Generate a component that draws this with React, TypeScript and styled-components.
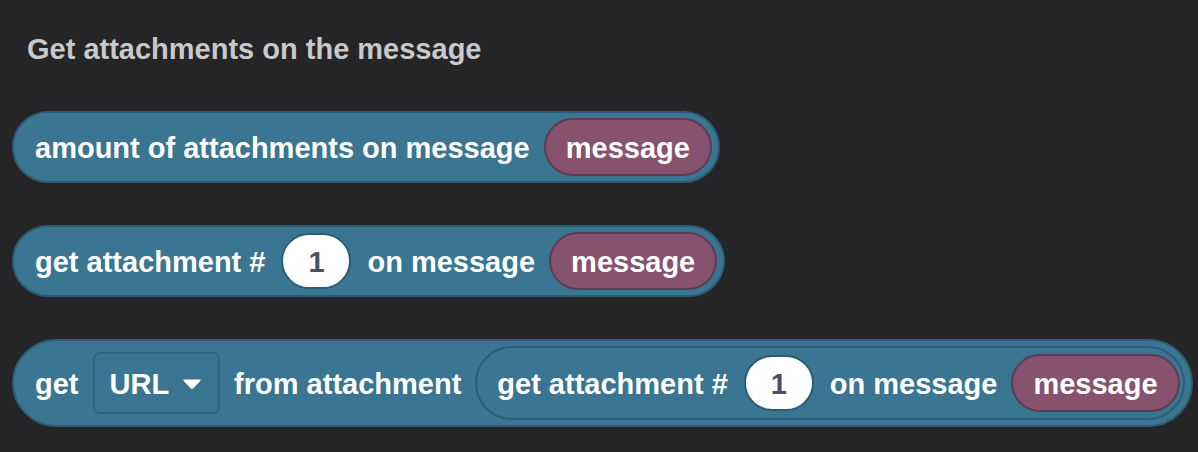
import React from 'react';
import styled, { createGlobalStyle } from 'styled-components';

const GlobalStyle = createGlobalStyle`
  html, body {
    margin: 0;
    background: #252527;
  }
  body {
    font-family: "Liberation Sans", Arial, sans-serif;
  }
`;

const Page = styled.div`
  display: flex;
  flex-direction: column;
  align-items: flex-start;
  gap: 42px;
  padding: 32px 12px 0;
`;

const Title = styled.h1`
  margin: 0 0 3px 15px;
  font-size: 29px;
  line-height: 34px;
  font-weight: 700;
  color: #c9c9c9;
`;

const Block = styled.div<{ $nested?: boolean }>`
  display: inline-flex;
  align-items: center;
  gap: 14px;
  box-sizing: border-box;
  padding: ${(p) => (p.$nested ? '6px 3px 6px 20px' : '5px 6px 5px 21px')};
  background: #3a7592;
  border: 2px solid #2d5d76;
  border-radius: 999px;
  color: #fff;
  font-size: 29px;
  font-weight: 700;
  white-space: nowrap;
`;

const Label = styled.span`
  line-height: 34px;
  padding-top: 2px;
`;

const VarPill = styled.span`
  display: inline-flex;
  align-items: center;
  box-sizing: border-box;
  height: 58px;
  padding: 2px 20px 0;
  background: #87526e;
  border: 2px solid #5f3c55;
  border-radius: 999px;
  color: #fff;
`;

const NumberField = styled.span`
  display: inline-flex;
  align-items: center;
  justify-content: center;
  box-sizing: border-box;
  width: 70px;
  height: 56px;
  padding-top: 2px;
  margin: 0 2px;
  background: #fff;
  border: 2px solid #2d5d76;
  border-radius: 999px;
  color: #4b4f68;
`;

const Dropdown = styled.span`
  display: inline-flex;
  align-items: center;
  gap: 13px;
  box-sizing: border-box;
  height: 62px;
  padding: 2px 16px 0 15px;
  border: 2px solid #2e6480;
  border-radius: 7px;
  color: #fff;
`;

const Caret = () => (
  <svg width="20" height="12" viewBox="0 0 20 12">
    <path d="M2.2 1.5 H17.8 Q19.6 1.5 18.3 3 L11.3 10.2 Q10 11.5 8.7 10.2 L1.7 3 Q0.4 1.5 2.2 1.5 Z" fill="#fff" />
  </svg>
);

const GetAttachment = ({ nested }: { nested?: boolean }) => (
  <Block $nested={nested}>
    <Label>get attachment #</Label>
    <NumberField>1</NumberField>
    <Label>on message</Label>
    <VarPill>message</VarPill>
  </Block>
);

export default function App() {
  return (
    <>
      <GlobalStyle />
      <Page>
        <Title>Get attachments on the message</Title>
        <Block>
          <Label>amount of attachments on message</Label>
          <VarPill>message</VarPill>
        </Block>
        <GetAttachment />
        <Block>
          <Label>get</Label>
          <Dropdown>
            URL
            <Caret />
          </Dropdown>
          <Label>from attachment</Label>
          <GetAttachment nested />
        </Block>
      </Page>
    </>
  );
}
